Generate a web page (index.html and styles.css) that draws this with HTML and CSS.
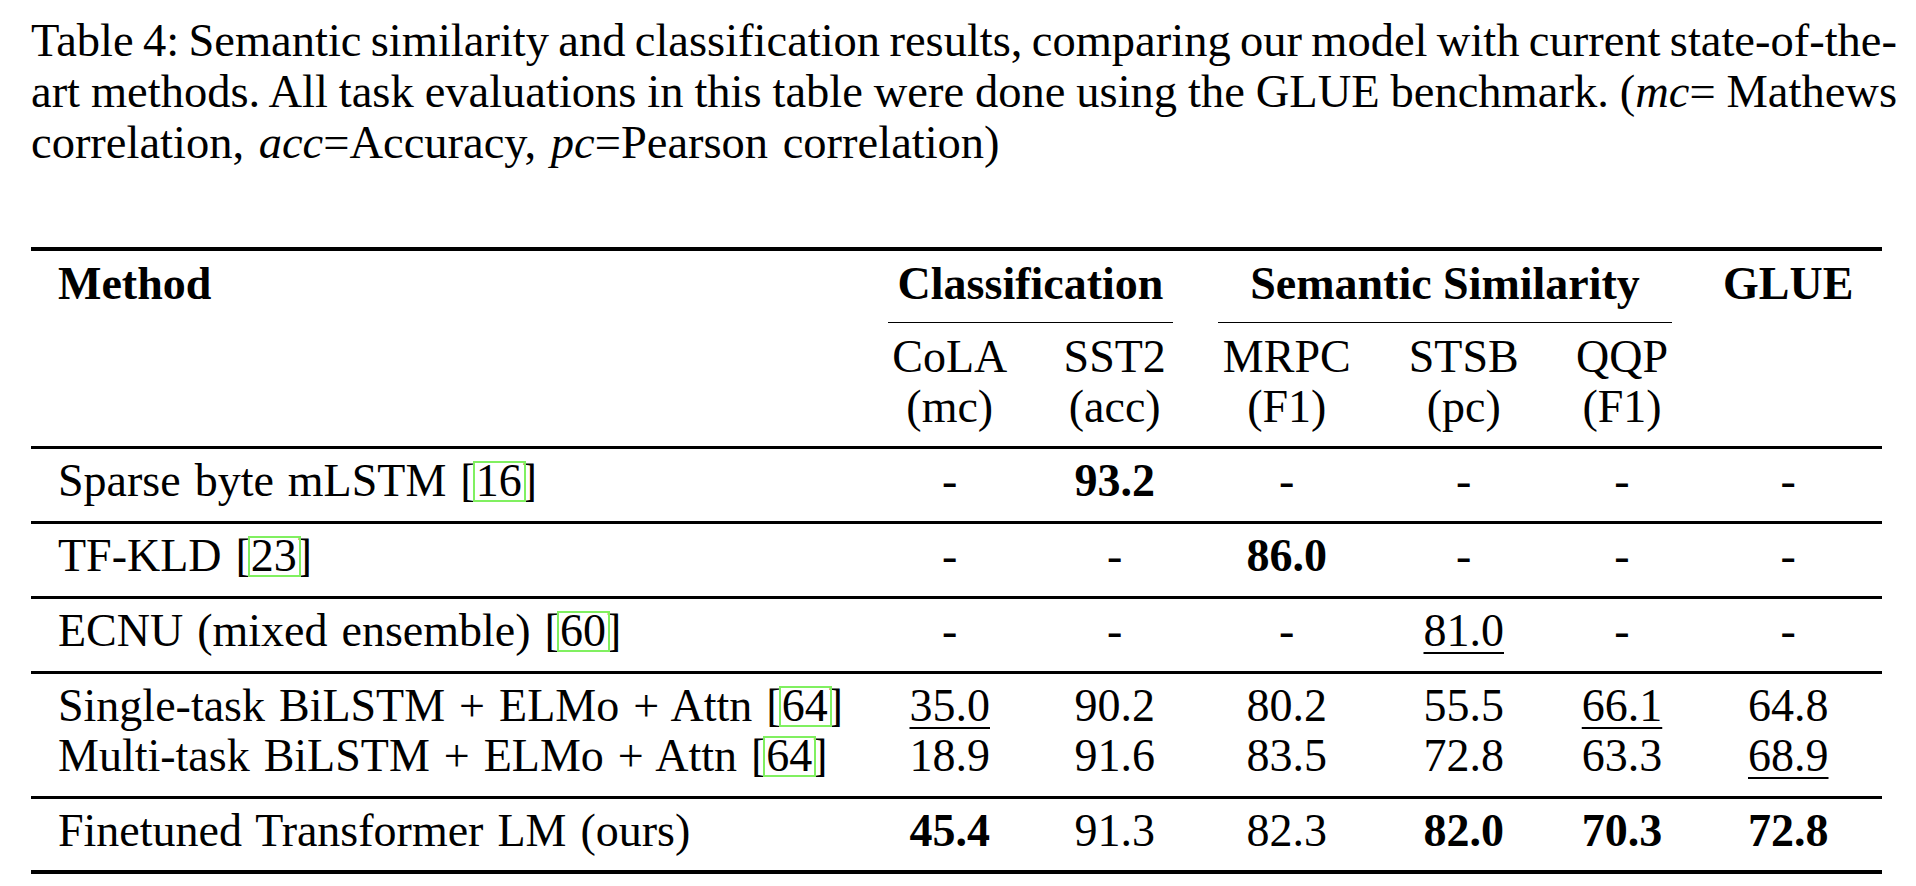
FILE: index.html
```html
<!DOCTYPE html>
<html lang="en">
<head>
<meta charset="utf-8">
<title>Table 4</title>
<link rel="stylesheet" href="styles.css">
</head>
<body>
<div class="page">
  <p class="caption">
    <span class="cap-line just">Table 4: Semantic similarity and classification results, comparing our model with current state-of-the-</span>
    <span class="cap-line just">art methods. All task evaluations in this table were done using the GLUE benchmark. (<i>mc</i>= Mathews</span>
    <span class="cap-line">correlation, <i>acc</i>=Accuracy, <i>pc</i>=Pearson correlation)</span>
  </p>

  <div class="table">
    <div class="thead">
      <div class="th method">Method</div>
      <div class="th group g-cls">Classification</div>
      <div class="th group g-sem">Semantic Similarity</div>
      <div class="th glue">GLUE</div>
      <div class="sub c2">CoLA<br>(mc)</div>
      <div class="sub c3">SST2<br>(acc)</div>
      <div class="sub c4">MRPC<br>(F1)</div>
      <div class="sub c5">STSB<br>(pc)</div>
      <div class="sub c6">QQP<br>(F1)</div>
    </div>

    <div class="tgroup">
      <div class="trow">
        <div class="name">Sparse byte mLSTM [<span class="cite">16</span>]</div>
        <div>-</div><div class="b">93.2</div><div>-</div><div>-</div><div>-</div><div>-</div>
      </div>
    </div>

    <div class="tgroup">
      <div class="trow">
        <div class="name">TF-KLD [<span class="cite">23</span>]</div>
        <div>-</div><div>-</div><div class="b">86.0</div><div>-</div><div>-</div><div>-</div>
      </div>
    </div>

    <div class="tgroup">
      <div class="trow">
        <div class="name">ECNU (mixed ensemble) [<span class="cite">60</span>]</div>
        <div>-</div><div>-</div><div>-</div><div><span class="ul">81.0</span></div><div>-</div><div>-</div>
      </div>
    </div>

    <div class="tgroup">
      <div class="trow">
        <div class="name">Single-task BiLSTM + ELMo + Attn [<span class="cite">64</span>]</div>
        <div><span class="ul">35.0</span></div><div>90.2</div><div>80.2</div><div>55.5</div><div><span class="ul">66.1</span></div><div>64.8</div>
      </div>
      <div class="trow">
        <div class="name">Multi-task BiLSTM + ELMo + Attn [<span class="cite">64</span>]</div>
        <div>18.9</div><div>91.6</div><div>83.5</div><div>72.8</div><div>63.3</div><div><span class="ul">68.9</span></div>
      </div>
    </div>

    <div class="tgroup last">
      <div class="trow">
        <div class="name">Finetuned Transformer LM (ours)</div>
        <div class="b">45.4</div><div>91.3</div><div>82.3</div><div class="b">82.0</div><div class="b">70.3</div><div class="b">72.8</div>
      </div>
    </div>
  </div>
</div>
</body>
</html>
```

FILE: styles.css
```css
html, body {
  margin: 0;
  padding: 0;
  background: #ffffff;
}

body {
  font-family: "Liberation Serif", "Times New Roman", Times, serif;
  font-size: 46px;
  color: #000000;
}

.page {
  --cols: 834.5px 168.5px 161.5px 182.5px 171.5px 145px 187.5px;
  padding: 15px 19px 0 31px;
}

.caption {
  margin: 0;
  font-size: 46.5px;
  line-height: 51px;
}

.cap-line {
  display: block;
  white-space: nowrap;
  word-spacing: 3px;
}

.cap-line.just {
  white-space: normal;
  word-spacing: -4px;
  text-align: justify;
  text-align-last: justify;
}

.caption i {
  font-style: italic;
}

.table {
  margin-top: 79px;
  width: 1851px;
  border-top: 4px solid #000;
  border-bottom: 4px solid #000;
  line-height: 50px;
}

.thead {
  display: grid;
  grid-template-columns: var(--cols);
  grid-template-rows: auto auto;
  border-bottom: 3px solid #000;
}

.th {
  font-weight: bold;
  padding-top: 8px;
}

.method {
  grid-column: 1;
  grid-row: 1;
  padding-left: 27px;
}

.group {
  grid-row: 1;
  text-align: center;
  margin: 0 22.5px;
  padding-bottom: 13px;
  border-bottom: 1px solid #000;
}

.g-cls { grid-column: 2 / 4; }
.g-sem { grid-column: 4 / 7; }

.glue {
  grid-column: 7;
  grid-row: 1;
  text-align: center;
}

.sub {
  grid-row: 2;
  text-align: center;
  padding-top: 9px;
  padding-bottom: 14px;
}

.c2 { grid-column: 2; }
.c3 { grid-column: 3; }
.c4 { grid-column: 4; }
.c5 { grid-column: 5; }
.c6 { grid-column: 6; }

.tgroup {
  padding: 7px 0 15px;
  border-bottom: 3px solid #000;
}

.tgroup.last {
  border-bottom: none;
  padding-bottom: 14px;
}

.trow {
  display: grid;
  grid-template-columns: var(--cols);
  text-align: center;
}

.trow .name {
  text-align: left;
  padding-left: 27px;
  white-space: nowrap;
  word-spacing: 2.5px;
}

.b {
  font-weight: bold;
}

.ul {
  text-decoration: underline;
  text-decoration-thickness: 2px;
  text-underline-offset: 6px;
}

.cite {
  position: relative;
}

.cite::after {
  content: "";
  position: absolute;
  left: -3px;
  right: -4px;
  top: 6px;
  bottom: 4px;
  border: 2px solid #80f060;
  pointer-events: none;
}
```
